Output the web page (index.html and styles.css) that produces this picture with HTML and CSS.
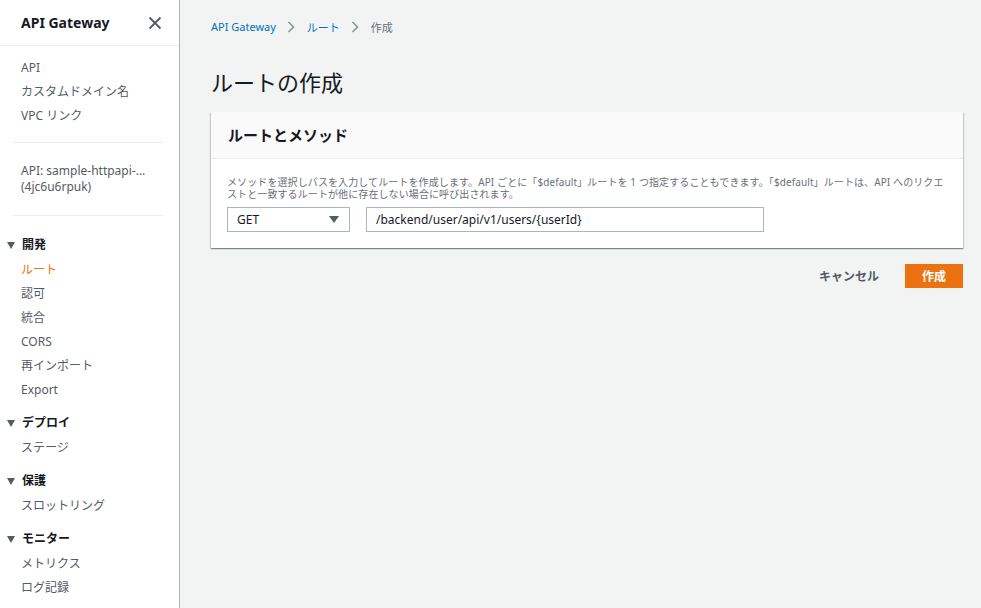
FILE: index.html
```html
<!DOCTYPE html>
<html lang="ja">
<head>
<meta charset="utf-8">
<title>ルートの作成</title>
<link rel="stylesheet" href="styles.css">
</head>
<body>
<div class="app">
  <aside class="sidebar">
    <div class="side-head">
      <span class="side-title">API Gateway</span>
      <svg class="close" width="14" height="14" viewBox="0 0 14 14"><path d="M1.5 1.5 L12.5 12.5 M12.5 1.5 L1.5 12.5" stroke="#545b64" stroke-width="1.8" fill="none"/></svg>
    </div>
    <ul class="nav top">
      <li>API</li>
      <li>カスタムドメイン名</li>
      <li>VPC リンク</li>
    </ul>
    <hr class="div">
    <div class="api-name"><div>API: sample-httpapi-...</div><div>(4jc6u6rpuk)</div></div>
    <hr class="div">
    <div class="section first">
      <div class="sec-head"><span class="tri"></span>開発</div>
      <ul class="nav">
        <li class="active">ルート</li>
        <li>認可</li>
        <li>統合</li>
        <li>CORS</li>
        <li>再インポート</li>
        <li>Export</li>
      </ul>
    </div>
    <div class="section">
      <div class="sec-head"><span class="tri"></span>デプロイ</div>
      <ul class="nav"><li>ステージ</li></ul>
    </div>
    <div class="section">
      <div class="sec-head"><span class="tri"></span>保護</div>
      <ul class="nav"><li>スロットリング</li></ul>
    </div>
    <div class="section">
      <div class="sec-head"><span class="tri"></span>モニター</div>
      <ul class="nav"><li>メトリクス</li><li>ログ記録</li></ul>
    </div>
  </aside>
  <main class="main">
    <nav class="crumbs">
      <a>API Gateway</a>
      <svg class="chev" width="8" height="12" viewBox="0 0 8 12"><path d="M1.5 1 L6.5 6 L1.5 11" stroke="#879596" stroke-width="1.5" fill="none"/></svg>
      <a>ルート</a>
      <svg class="chev" width="8" height="12" viewBox="0 0 8 12"><path d="M1.5 1 L6.5 6 L1.5 11" stroke="#879596" stroke-width="1.5" fill="none"/></svg>
      <span class="cur">作成</span>
    </nav>
    <h1 class="title">ルートの作成</h1>
    <section class="card">
      <div class="card-head">ルートとメソッド</div>
      <div class="card-body">
        <p class="desc">メソッドを選択しパスを入力してルートを作成します。API ごとに「$default」ルートを 1 つ指定することもできます。「$default」ルートは、API へのリクエストと一致するルートが他に存在しない場合に呼び出されます。</p>
        <div class="row">
          <div class="select"><span>GET</span><span class="caret"></span></div>
          <div class="input">/backend/user/api/v1/users/{userId}</div>
        </div>
      </div>
    </section>
    <div class="actions">
      <button class="btn-link">キャンセル</button>
      <button class="btn-primary">作成</button>
    </div>
  </main>
</div>
</body>
</html>
```
FILE: styles.css
```css
* { box-sizing: border-box; }
html, body { margin: 0; padding: 0; height: 100%; }
body {
  font-family: "Noto Sans", "Noto Sans CJK JP", sans-serif;
  font-size: 12px;
  color: #16191f;
  background: #f2f3f3;
}
.app { display: flex; height: 608px; }
.sidebar {
  width: 180px;
  flex: none;
  background: #fff;
  border-right: 1px solid #aab7b8;
}
.side-head {
  height: 46px;
  border-bottom: 1px solid #eaeded;
  display: flex;
  align-items: center;
  justify-content: space-between;
  padding: 0 17px 0 21px;
}
.side-title { font-size: 14px; font-weight: 700; color: #16191f; }
.close { display: block; }
.nav { list-style: none; margin: 0; padding: 0; }
.nav li { line-height: 24px; height: 24px; padding-left: 21px; color: #545b64; }
.nav li.active { color: #ec7211; }
.nav.top { padding-top: 10px; }
.div { border: 0; border-top: 1px solid #eaeded; margin: 14px 16px 0 13px; }
.api-name { padding: 20px 0 20px 21px; color: #545b64; }
.api-name div { height: 16px; line-height: 16px; white-space: nowrap; }
.api-name + .div { margin-top: 0; }
.section { margin-top: 9px; }
.section.first { margin-top: 17px; }
.sec-head {
  height: 24px; line-height: 24px;
  font-weight: 700;
  color: #16191f;
  display: flex; align-items: center;
  padding-left: 7px;
  margin-bottom: 1px;
}
.tri {
  width: 0; height: 0;
  border-left: 4px solid transparent;
  border-right: 4px solid transparent;
  border-top: 7px solid #545b64;
  margin-right: 7px;
}
.main { flex: 1; padding: 0 18px 0 31px; }
.crumbs { height: 53px; display: flex; align-items: center; font-size: 11px; }
.crumbs a { color: #0073bb; }
.crumbs .chev { margin: 0 12px 0 11px; }
.crumbs .cur { color: #687078; }
.title { margin: 0; font-size: 22px; font-weight: 400; line-height: 59px; height: 59px; color: #16191f; }
.card {
  background: #fff;
  box-shadow: 0 1px 1px 0 rgba(0,28,36,.3), 1px 1px 1px 0 rgba(0,28,36,.15), -1px 1px 1px 0 rgba(0,28,36,.15);
}
.card-head {
  height: 47px;
  background: #fafafa;
  border-bottom: 1px solid #eaeded;
  padding: 0 17px 2px;
  display: flex; align-items: center;
  font-size: 15px; font-weight: 700;
  color: #16191f;
}
.card-body { padding: 17px 16px 16px 16px; }
.desc { margin: 0 0 7px; font-size: 10px; line-height: 12px; letter-spacing: 0.1px; color: #687078; }
.row { display: flex; gap: 16px; }
.select, .input {
  height: 25px;
  border: 1px solid #aab7b8;
  background: #fff;
  display: flex; align-items: center;
  font-size: 12px;
  color: #16191f;
}
.select { width: 123px; justify-content: space-between; padding: 0 10px 0 9px; }
.caret {
  width: 0; height: 0;
  border-left: 5px solid transparent;
  border-right: 5px solid transparent;
  border-top: 7px solid #545b64;
}
.input { width: 398px; padding: 0 9px; }
.actions { display: flex; justify-content: flex-end; align-items: center; margin-top: 16px; gap: 26px; }
.btn-link {
  border: 0; background: none; padding: 0;
  font-family: inherit; font-size: 12px; font-weight: 700; color: #545b64;
}
.btn-primary {
  border: 0; background: #ec7211; color: #fff;
  font-family: inherit; font-size: 12px; font-weight: 700;
  width: 58px; height: 24px; padding: 0;
}
```
